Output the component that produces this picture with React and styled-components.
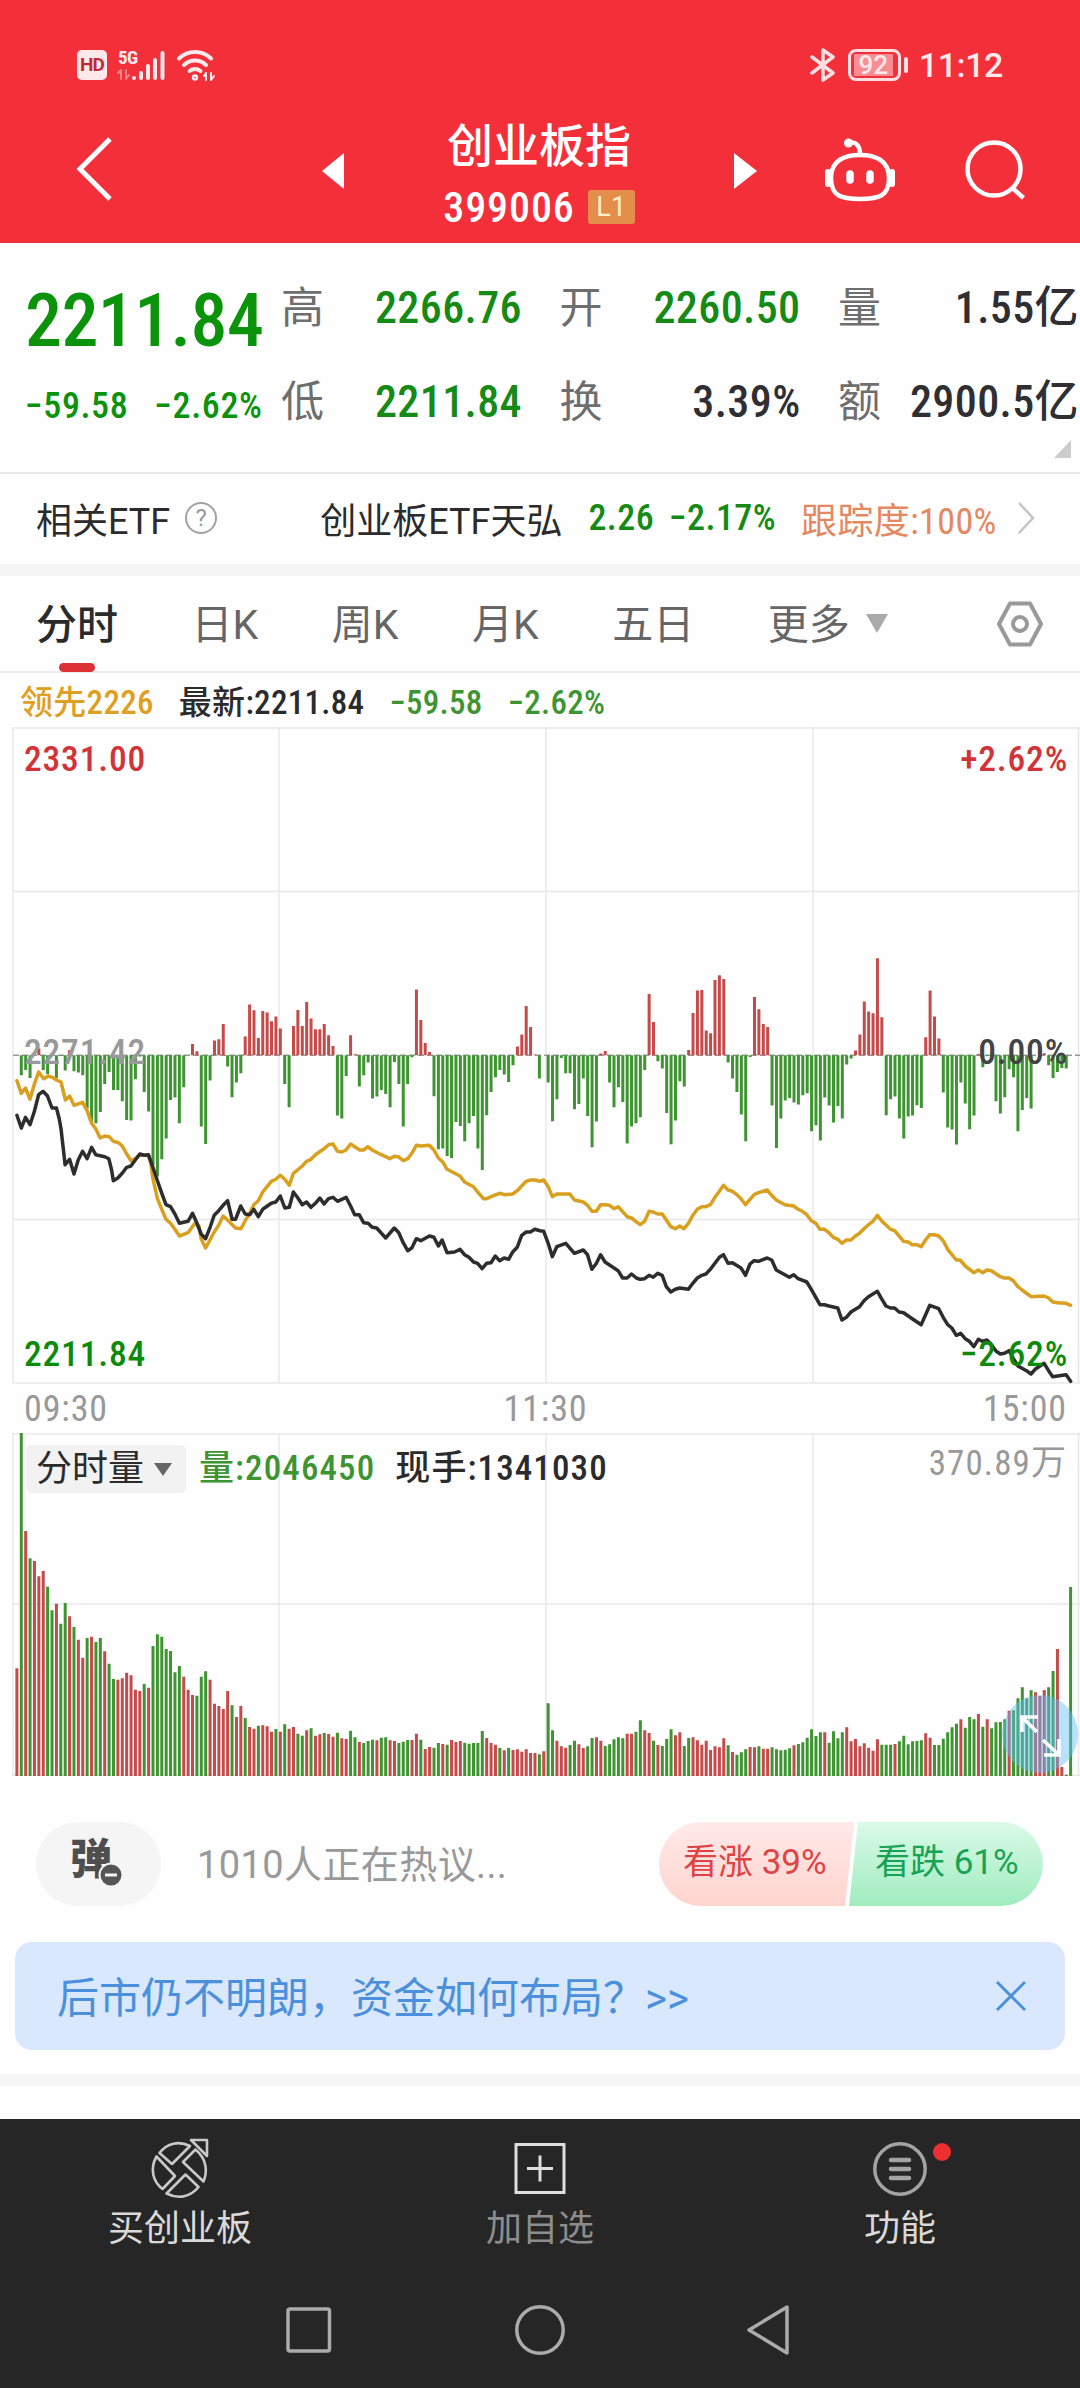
import styled, { createGlobalStyle } from "styled-components"

const GlobalStyle = createGlobalStyle`
    * {
        box-sizing: border-box;
    }
    body {
        margin: 0;
        background: #fefefe;
        color: #2b2b2b;
        font-family: Roboto, "Noto Sans CJK SC", sans-serif;
    }
    svg {
        display: block;
        flex-shrink: 0;
    }
`

const NUMERIC = `"Roboto Condensed", "Noto Sans CJK SC", sans-serif`

const RED = "#c54a4a"
const GREEN = "#3f9432"

// one entry per minute, 09:30 to 15:00
const momentum = [
    0, -60, -44, -68, 0, 20, -44, -56, 0, -68, -2, -46, 16, -48, -52, -60, -160, -205, -204, -170,
    -86, -50, -104, -104, -138, -194, -196, -72, -4, -110, -169, -330, -364, -312, -250, -134, -127, -204, -96, 0,
    34, 12, -214, -266, -76, 44, 48, 94, -34, -126, -82, -54, 56, 152, 135, 52, 133, 128, 102, 116,
    80, -86, -156, 88, 136, 88, 160, 110, 78, 78, 94, 60, 28, -181, -190, -62, 60, 3, -94, -60,
    -22, -130, -124, -104, -116, -156, -20, -86, -214, -86, -6, 197, 106, 37, 10, -123, -282, -280, -302, -308,
    -200, -212, -258, -204, -182, -280, -344, -180, -110, -66, -44, -58, -80, -30, 26, 62, 148, 85, 2, -70,
    0, -82, -198, -132, -8, -54, -54, -162, -146, -70, -182, -276, -199, 5, 13, -82, -156, -96, -140, -265,
    -214, -204, -186, -44, 184, 100, -18, -40, -173, -267, -196, -78, -94, 16, 127, 194, 196, 74, 66, 226,
    240, 229, -22, -70, -110, -178, -258, -5, 175, 138, 94, 85, -151, -278, -190, -136, -128, -142, -148, -120,
    -114, -228, -210, -256, -127, -151, -202, -152, -190, -28, -10, 14, 62, 161, 131, 126, 291, 114, -180, -132,
    -124, -190, -250, -184, -181, -150, -158, 54, 194, 116, 50, -112, -217, -223, -268, -82, -145, -222, -181, 4,
    -36, -2, -2, -138, -175, -126, -42, -66, -228, -164, -128, -160, 0, 14, 6, -30, -68, -50, -38, -40, 0,
]

// negative entries are minutes that closed lower
const volume = [
    323, -1029, 735, -653, 645, 599, 615, -568, -497, 517, -457, -519, 479, -447, 409, 355, -414, 418, -402, -414,
    374, -337, -291, 289, 293, 310, 302, 259, 255, -276, 265, -390, -425, -418, -381, -375, -311, -330, 298, 259,
    243, -241, -298, -314, 289, 217, 210, 201, 255, -212, 177, 210, -174, 147, 142, -151, 152, 149, 133, -141,
    133, -155, 142, 147, -127, -121, 137, -143, 121, 125, -129, 126, 118, -130, 113, 111, -136, -116, 102, -99,
    -105, -109, 107, -115, -116, 107, 105, -99, -103, -108, 108, 127, -109, 81, 87, -85, -99, 96, -94, 108,
    102, 105, -100, -97, -99, -99, -135, 114, 99, 94, -84, 77, -84, 78, 80, 73, 80, 69, 69, -65,
    74, -218, -137, 106, 89, 85, -93, -106, 95, 84, -89, -114, 116, 106, -90, -95, -110, -116, -113, 127,
    127, -133, -167, 137, 129, -106, 93, -90, -111, -140, 122, 131, -90, -114, 116, 107, 94, 106, 78, 89,
    86, 113, -92, 72, -64, -71, -80, 87, 86, -89, 82, 82, -86, -80, -77, -79, -83, 92, -96, -101,
    -115, -140, -120, -131, 131, -100, -134, -113, -131, 146, 104, 111, 89, 98, 85, 76, 110, -94, -94, -94,
    96, -104, -121, -95, -104, -105, -107, 128, 115, -93, -93, -112, -131, -146, -157, 170, -145, -177, -170, 186,
    -148, 170, -143, -161, -162, -170, 196, -197, -233, -266, -233, -257, 251, 240, 258, -266, -315, 381, 27, -4, -567,
]

const leadLine = "49,452 62,490 74,474 87,508 100,462 112,426 127,446 140,438 152,442 164,450 177,456 190,510 202,498 215,526 240,517 253,542 266,580 278,596 291,624 304,618 317,620 329,634 344,638 355,648 368,672 380,692 393,686 406,674 431,676 438,700 444,746 457,806 470,838 482,868 495,880 508,898 521,918 546,908 566,880 578,888 584,926 597,954 622,906 635,886 648,858 661,870 684,894 700,896 712,872 725,850 737,824 750,812 763,786 788,754 801,748 814,736 827,748 840,766 852,730 878,708 890,694 903,688 916,674 941,656 954,644 967,642 980,664 992,666 1005,660 1018,642 1030,650 1045,660 1056,660 1068,650 1081,660 1107,674 1132,686 1145,679 1158,681 1171,692 1184,686 1196,670 1209,646 1222,648 1247,646 1260,660 1273,684 1286,696 1298,718 1336,738 1349,756 1375,770 1387,786 1404,806 1413,806 1440,794 1454,790 1464,794 1489,792 1502,782 1515,768 1528,754 1540,750 1553,750 1568,754 1579,750 1592,770 1604,800 1617,792 1655,792 1668,810 1694,816 1706,826 1719,844 1732,844 1744,824 1757,824 1770,826 1783,836 1795,830 1821,860 1834,864 1846,874 1859,884 1872,874 1885,844 1897,846 1910,852 1923,852 1935,870 1948,890 1961,896 1974,888 1986,896 1999,880 2012,856 2025,838 2038,830 2050,830 2063,824 2076,802 2089,784 2101,766 2114,780 2127,784 2140,794 2152,806 2165,824 2178,808 2190,794 2203,788 2228,780 2241,796 2254,810 2279,824 2305,828 2318,838 2330,844 2343,854 2356,872 2369,880 2381,898 2394,898 2407,908 2420,922 2433,928 2445,940 2458,930 2471,930 2484,918 2496,910 2509,896 2522,884 2535,874 2548,856 2560,872 2586,898 2598,902 2624,934 2637,936 2649,944 2662,944 2675,950 2688,930 2700,914 2713,914 2726,918 2739,932 2752,958 2777,990 2788,990 2803,1008 2828,1028 2841,1020 2854,1028 2866,1020 2879,1022 2905,1040 2917,1044 2930,1044 2943,1052 2956,1070 2968,1080 2994,1100 3032,1098 3045,1104 3057,1116 3070,1118 3096,1120 3109,1126"

const priceLine = "49,556 62,594 74,562 87,584 100,544 112,494 125,484 138,498 151,534 164,534 172,566 177,596 189,704 202,688 215,732 227,690 240,664 253,686 266,652 278,674 304,680 316,686 324,720 329,752 342,744 355,730 368,712 380,708 393,690 406,672 419,676 431,674 444,712 457,752 470,790 482,824 495,830 508,852 521,880 546,874 559,850 572,880 584,912 597,926 610,892 622,856 635,842 648,826 661,812 674,868 684,868 699,828 712,852 725,854 737,838 750,860 763,838 788,820 801,816 814,798 827,834 840,832 852,786 865,804 878,824 890,816 903,832 916,820 929,804 941,822 954,806 967,802 980,814 1005,802 1018,828 1030,854 1043,854 1056,878 1069,880 1081,892 1094,894 1120,924 1145,894 1158,908 1171,938 1184,962 1196,954 1209,926 1222,932 1247,918 1260,922 1273,948 1284,930 1298,968 1320,966 1336,958 1349,974 1362,982 1375,996 1387,1000 1400,1016 1413,1000 1426,998 1438,978 1451,992 1464,984 1477,988 1489,966 1502,952 1515,916 1528,906 1540,906 1553,898 1568,902 1579,904 1592,940 1604,980 1617,950 1643,940 1668,970 1694,960 1706,974 1719,1018 1732,1000 1744,974 1757,996 1795,1022 1808,1044 1821,1044 1834,1032 1848,1044 1859,1048 1872,1046 1885,1036 1897,1042 1910,1030 1923,1036 1935,1070 1948,1086 1961,1078 1974,1074 1999,1078 2012,1060 2025,1044 2038,1036 2050,1032 2063,1018 2089,982 2101,974 2114,1000 2127,998 2152,1014 2165,1036 2178,1002 2190,992 2203,994 2228,984 2241,990 2254,1020 2292,1042 2305,1034 2318,1046 2343,1056 2356,1078 2381,1124 2394,1124 2407,1128 2433,1134 2445,1170 2458,1162 2471,1146 2496,1130 2509,1112 2522,1100 2535,1092 2548,1084 2560,1106 2573,1128 2586,1134 2598,1134 2611,1146 2624,1148 2649,1166 2675,1184 2688,1154 2700,1126 2726,1136 2739,1162 2752,1184 2764,1194 2777,1216 2790,1210 2803,1226 2815,1234 2828,1250 2841,1228 2854,1234 2866,1230 2879,1244 2893,1264 2905,1272 2917,1270 2930,1262 2943,1286 2956,1308 2981,1322 2994,1332 3006,1318 3032,1300 3045,1322 3057,1340 3096,1334 3109,1354"

const minuteX = (i) => 16.9 + i * 4.3905

// bars rising from / hanging below a base line, as a single path
const barPath = (values, base, keep, hang) =>
    values
        .map((v, i) => (keep(v) ? `M${minuteX(i).toFixed(2)} ${base}V${(base - (hang ? v : Math.abs(v)) / 3).toFixed(1)}` : ""))
        .join("")

// "x,y x,y" samples to page pixels, y measured from the top of the chart
const toPoints = (line) =>
    line
        .split(" ")
        .map((p) => {
            const [x, y] = p.split(",").map(Number)
            return `${(x / 2.904).toFixed(1)},${(203 + y / 3).toFixed(1)}`
        })
        .join(" ")

const Page = styled.div`
    width: 1080px;
    height: 2388px;
    display: flex;
    flex-direction: column;
    overflow: hidden;
`

const TopArea = styled.header`
    height: 243px;
    background: #f32f39;
    color: #fff;
`

const StatusBar = styled.div`
    height: 112px;
    padding: 18px 77px 0 77px;
    display: flex;
    align-items: center;
    justify-content: space-between;
    color: #ffe9ea;
`

const StatusGroup = styled.div`
    display: flex;
    align-items: center;
`

const HdBadge = styled.span`
    width: 30px;
    height: 30px;
    border-radius: 5px;
    background: #ffe9ea;
    color: #c02a35;
    font-size: 19px;
    font-weight: 700;
    line-height: 30px;
    text-align: center;
    letter-spacing: -1px;
`

const NetType = styled.span`
    width: 18px;
    margin: 0 -1px 14px 11px;
    font-family: ${NUMERIC};
    font-size: 19px;
    font-weight: 700;
    line-height: 16px;
    letter-spacing: -0.5px;
`

const SignalIcon = styled.svg`
    margin-left: -20px;
`

const WifiIcon = styled.svg`
    margin-left: 9px;
`

const Battery = styled.span`
    width: 53px;
    height: 32px;
    margin-left: 12px;
    padding: 2px;
    border: 3px solid #ffe0e2;
    border-radius: 8px;
`

const BatteryFill = styled.span`
    display: block;
    width: 39px;
    height: 22px;
    margin-left: 1px;
    background: #f98d93;
    font-size: 26px;
    font-weight: 500;
    line-height: 22px;
    text-align: center;
`

const BatteryTip = styled.span`
    width: 4px;
    height: 16px;
    margin-left: 3px;
    border-radius: 2px;
    background: #ffe0e2;
`

const Clock = styled.span`
    margin-left: 11px;
    font-size: 34px;
    line-height: 36px;
    font-weight: 500;
    letter-spacing: -0.4px;
`

const TitleBar = styled.div`
    height: 131px;
    padding: 0 54px 0 76px;
    display: flex;
    align-items: center;
`

const TitleIcon = styled.svg`
    margin-top: ${(props) => props.$lift}px;
    margin-left: ${(props) => props.$gap || 0}px;
`

const TitleBlock = styled.div`
    width: 391px;
    display: flex;
    flex-direction: column;
    align-items: center;
`

const StockName = styled.h1`
    margin: -3px 0 0;
    font-size: 46px;
    font-weight: 500;
    line-height: 62px;
`

const StockCode = styled.div`
    height: 61px;
    display: flex;
    align-items: center;
    gap: 13px;
    font-family: ${NUMERIC};
    font-size: 42px;
    font-weight: 500;
    letter-spacing: 0.9px;
`

const LevelTag = styled.span`
    width: 47px;
    height: 34px;
    border-radius: 3px;
    background: #e38e4a;
    color: #fff0c8;
    font-family: Roboto;
    font-size: 27px;
    font-weight: 400;
    line-height: 34px;
    text-align: center;
    letter-spacing: 0;
`

const Quote = styled.section`
    height: 231px;
    padding-top: 32px;
    border-bottom: 2px solid #e9e9e9;
    display: flex;
`

const LastPrice = styled.div`
    width: 281px;
    padding-left: 25px;
    color: #0b930b;
    font-family: ${NUMERIC};
    font-weight: 500;
    white-space: nowrap;
`

const Price = styled.div`
    font-size: 74px;
    line-height: 92px;
    letter-spacing: -0.6px;
`

const Change = styled.div`
    margin-top: 9px;
    display: flex;
    gap: 26px;
    font-size: 36px;
    line-height: 60px;
    letter-spacing: 0.6px;
`

const QuoteSide = styled.div`
    width: 798px;
`

const QuoteGrid = styled.div`
    padding-top: 3px;
    display: grid;
    grid-template-columns: repeat(3, 241px);
    column-gap: 37.5px;
    row-gap: 34px;
`

const QuoteCell = styled.div`
    display: flex;
    justify-content: space-between;
    line-height: 60px;
    white-space: nowrap;
`

const QuoteLabel = styled.span`
    color: #6e6e6e;
    font-size: 43px;
`

const QuoteValue = styled.span`
    color: ${(props) => (props.$down ? "#168a16" : "#2f2f33")};
    font-family: ${NUMERIC};
    font-size: 44px;
    font-weight: 500;
    letter-spacing: 0.4px;
`

const FoldMark = styled.svg`
    margin: 8px 8px 0 auto;
`

const EtfRow = styled.section`
    height: 90px;
    padding: 0 0 2px 36px;
    display: flex;
    align-items: center;
    font-size: 36px;
    white-space: nowrap;
`

const HelpIcon = styled.span`
    width: 32px;
    height: 32px;
    margin: 0 103px 0 15px;
    border: 2px solid #a2a2a2;
    border-radius: 50%;
    color: #999;
    font-size: 24px;
    line-height: 28px;
    text-align: center;
`

const EtfChange = styled.span`
    margin-left: ${(props) => props.$gap}px;
    color: #168a16;
    font-family: ${NUMERIC};
    font-weight: 500;
    letter-spacing: 0.4px;
`

const TrackRate = styled.span`
    margin: 0 20px 0 25px;
    color: #e5875f;
    font-family: ${NUMERIC};
    letter-spacing: 0.4px;
`

const Divider = styled.div`
    height: 12px;
    background: #f5f5f5;
`

const Tabs = styled.nav`
    height: 97px;
    padding: 0 37px 0 36px;
    border-bottom: 2px solid #ececec;
    display: flex;
    align-items: center;
    gap: 73.5px;
`

const Tab = styled.span`
    height: 95px;
    display: flex;
    flex-direction: column;
    align-items: center;
    color: ${(props) => (props.$active ? "#2b2b2b" : "#666")};
    font-size: 41px;
    font-weight: ${(props) => (props.$active ? 500 : 400)};
    line-height: 86px;
    padding-top: 6px;

    &::after {
        content: "";
        width: 36px;
        height: 9px;
        flex-shrink: 0;
        margin-top: -5px;
        border-radius: 5px;
        background: ${(props) => (props.$active ? "#dc3236" : "transparent")};
    }
`

const MoreTab = styled.div`
    display: flex;
    align-items: center;
    gap: 16px;
`

const SettingsIcon = styled.svg`
    margin-left: auto;
`

const Legend = styled.div`
    height: 54px;
    padding: 6px 0 0 20px;
    display: flex;
    align-items: center;
    gap: 25px;
    font-family: ${NUMERIC};
    font-size: 33px;
    font-weight: 500;
    letter-spacing: 0.3px;
    line-height: 48px;
    white-space: nowrap;
`

const LegendItem = styled.span`
    color: ${(props) => props.$color};
`

const ChartText = styled.text`
    fill: ${(props) => props.fill};
    font-family: ${NUMERIC};
    font-size: 35.5px;
    font-weight: 500;
    letter-spacing: 0.8px;
`

const TimeAxis = styled.div`
    height: 49px;
    padding: 1px 13px 0 24px;
    display: flex;
    justify-content: space-between;
    align-items: center;
    color: #999;
    font-family: ${NUMERIC};
    font-size: 36px;
    letter-spacing: 0.9px;
`

const VolumePanel = styled.div`
    position: relative;
    height: 343px;
`

const VolumeLegend = styled.div`
    position: absolute;
    top: 12px;
    left: 26px;
    right: 13px;
    display: flex;
    align-items: center;
    font-family: ${NUMERIC};
    font-size: 35px;
    font-weight: 500;
    letter-spacing: 1.1px;
    line-height: 48px;
    white-space: nowrap;
`

const VolumeSelect = styled.span`
    width: 160px;
    height: 48px;
    padding-left: 10px;
    margin-right: 13px;
    border-radius: 5px;
    background: #f2f2f2;
    display: flex;
    align-items: center;
    gap: 10px;
    font-weight: 400;
    font-size: 36px;
    letter-spacing: 0;
`

const VolumeText = styled.span`
    margin-right: 20px;
    color: ${(props) => props.$color};
`

const VolumeMax = styled.span`
    margin: -11px 0 0 auto;
    color: #999;
    font-weight: 400;
`

const ExpandButton = styled.button`
    position: absolute;
    left: 1002px;
    top: 262px;
    width: 76px;
    height: 78px;
    padding: 0;
    border: 0;
    border-radius: 50%;
    background: rgba(100, 190, 250, 0.45);
`

const Discuss = styled.section`
    height: 166px;
    padding: 10px 37px 0 36px;
    display: flex;
    align-items: center;
`

const BulletButton = styled.div`
    width: 125px;
    height: 84px;
    border-radius: 42px;
    background: #f5f5f5;
    position: relative;
    padding-left: 34px;
    color: #4e4e4e;
    font-size: 42px;
    font-weight: 900;
    line-height: 75px;
`

const BulletOff = styled.svg`
    position: absolute;
    left: 62px;
    top: 40px;
`

const DiscussText = styled.span`
    margin: -5px 0 0 36px;
    color: #999;
    font-size: 38px;
    letter-spacing: 0.4px;
`

const Votes = styled.div`
    width: 384px;
    height: 84px;
    margin-left: auto;
    border-radius: 42px;
    overflow: hidden;
    display: flex;
    font-size: 35px;
    line-height: 82px;
    white-space: nowrap;
`

const VoteUp = styled.div`
    width: 195px;
    padding-left: 24px;
    background: linear-gradient(#ffeae9, #ffd4ce);
    clip-path: polygon(0 0, 100% 0, 186px 100%, 0 100%);
    color: #de4444;
`

const VoteDown = styled.div`
    width: 194px;
    margin-left: -5px;
    padding-left: 26px;
    background: linear-gradient(#dbfae8, #a0ecbf);
    clip-path: polygon(9px 0, 100% 0, 100% 100%, 0 100%);
    color: #17a356;
`

const Banner = styled.section`
    height: 108px;
    margin: 0 15px 24px;
    padding: 0 38px 0 42px;
    border-radius: 17px;
    background: #d9e8fd;
    display: flex;
    align-items: center;
    justify-content: space-between;
    color: #4a90dc;
    font-size: 42px;
`

const BannerText = styled.span`
    margin-top: -4px;
    white-space: pre;
`

const BottomArea = styled.footer`
    height: 269px;
    margin-top: auto;
    background: #262626;
`

const Actions = styled.div`
    height: 154px;
    display: grid;
    grid-template-columns: repeat(3, 1fr);
`

const Action = styled.div`
    padding-top: 19px;
    display: flex;
    flex-direction: column;
    align-items: center;
    color: ${(props) => (props.$muted ? "#8d8d8d" : "#dadada")};
    font-size: 36px;
    line-height: 50px;
    gap: 4px;
`

const SystemNav = styled.div`
    height: 115px;
    padding: 0 290px 2px 285px;
    display: flex;
    align-items: center;
    justify-content: space-between;
`

const stats = [
    { label: "高", value: "2266.76", down: true },
    { label: "开", value: "2260.50", down: true },
    { label: "量", value: "1.55亿" },
    { label: "低", value: "2211.84", down: true },
    { label: "换", value: "3.39%" },
    { label: "额", value: "2900.5亿" },
]

const Grid = ({ bottom, rows }) => (
    <g stroke="#e8e8e8" strokeWidth="1.5">
        {[13, 279, 546, 813, 1078.5].map((x) => <line key={x} x1={x} x2={x} y1="0" y2={bottom} />)}
        {rows.map((y) => <line key={y} x1="12" x2="1080" y1={y} y2={y} />)}
    </g>
)

const Status = () => (
    <StatusBar>
        <StatusGroup>
            <HdBadge>HD</HdBadge>
            <NetType>5G</NetType>
            <SignalIcon width="52" height="32" viewBox="0 0 52 32" fill="none" stroke="#ffe9ea" strokeLinecap="round" strokeWidth="4">
                <path d="M6 21v9M3 24l3-3M11 21v9M11 30l3-4" stroke="#f9868c" strokeWidth="2" />
                <path d="M19 29v.1M26 24v5M33 17v12M40 11v18M47.500 4v25" />
            </SignalIcon>
            <WifiIcon width="40" height="32" viewBox="0 0 40 32" fill="none" stroke="#ffe9ea" strokeLinecap="round" strokeWidth="4">
                <path d="M3 9.500a23 23 0 0 1 32 0M8 16a16 16 0 0 1 22 0M13.500 22a9 9 0 0 1 11 0" />
                <circle cx="19" cy="28.500" r="1.200" />
                <path d="M30 24v7M28 27l2-3M35 24v7M35 31l3-4" strokeWidth="2" />
            </WifiIcon>
        </StatusGroup>
        <StatusGroup>
            <svg width="26" height="34" viewBox="0 0 26 34" fill="none" stroke="#ffe0e2" strokeWidth="3.500" strokeLinejoin="round" strokeLinecap="round">
                <path d="M2 9l21 16-10 7V2l10 7L2 25" />
            </svg>
            <Battery><BatteryFill>92</BatteryFill></Battery>
            <BatteryTip />
            <Clock>11:12</Clock>
        </StatusGroup>
    </StatusBar>
)

const Title = () => (
    <TitleBar>
        <TitleIcon $lift={-18} width="36" height="64" viewBox="0 0 36 64" fill="none" stroke="#fff" strokeWidth="5">
            <path d="M34 2L4 32l30 30" />
        </TitleIcon>
        <TitleIcon $lift={-13} $gap={210} width="22" height="36" viewBox="0 0 22 36" fill="#fff">
            <path d="M22 0v36L0 18z" />
        </TitleIcon>
        <TitleBlock>
            <StockName>创业板指</StockName>
            <StockCode>399006<LevelTag>L1</LevelTag></StockCode>
        </TitleBlock>
        <TitleIcon $lift={-13} width="23" height="36" viewBox="0 0 23 36" fill="#fff">
            <path d="M0 0v36l23-18z" />
        </TitleIcon>
        <TitleIcon $lift={-16} $gap={68} width="70" height="64" viewBox="0 0 70 64" fill="none" stroke="#fff" strokeWidth="4.500">
            <path d="M35 17C50 17 64 22 64 40S54 61 35 61 6 58 6 40 20 17 35 17z" />
            <path d="M24 5c7-2 11 3 11 11" />
            <circle cx="23.500" cy="5" r="4.500" fill="#fff" stroke="none" />
            <path d="M3 34v12M67 34v12" strokeWidth="6" strokeLinecap="round" />
            <path d="M25 36v6M45 36v6" strokeWidth="7.500" strokeLinecap="round" />
        </TitleIcon>
        <TitleIcon $lift={-16} $gap={69} width="62" height="62" viewBox="0 0 62 62" fill="none" stroke="#fff" strokeWidth="4.500">
            <circle cx="30" cy="30" r="26.500" />
            <path d="M48.500 49l11 10" />
        </TitleIcon>
    </TitleBar>
)

const PriceChart = () => (
    <svg width="1080" height="657" viewBox="0 0 1080 657">
        <Grid bottom="656" rows={[1, 164.5, 492.5, 656]} />
        <line x1="13" x2="1080" y1="328.300" y2="328.300" stroke="#999" strokeWidth="1.500" strokeDasharray="6 3" />
        <path d={barPath(momentum, 328.300, (v) => v > 0, true)} stroke={RED} strokeWidth="3" />
        <path d={barPath(momentum, 328.300, (v) => v < 0, true)} stroke={GREEN} strokeWidth="3" />
        <ChartText x="24" y="337" fill="#999">2271.42</ChartText>
        <ChartText x="1068" y="337" textAnchor="end" fill="#444">0.00%</ChartText>
        <g fill="none" strokeWidth="3.500" strokeLinejoin="round" strokeLinecap="round">
            <polyline points={toPoints(leadLine)} stroke="#d9a01f" />
            <polyline points={toPoints(priceLine)} stroke="#2d2d2d" />
        </g>
        <ChartText x="24" y="44" fill="#d13438">2331.00</ChartText>
        <ChartText x="1068" y="44" textAnchor="end" fill="#d13438">+2.62%</ChartText>
        <ChartText x="24" y="639" fill="#0b8a0b">2211.84</ChartText>
        <ChartText x="1068" y="639" textAnchor="end" fill="#0b8a0b">−2.62%</ChartText>
    </svg>
)

const VolumeChart = () => (
    <VolumePanel>
        <svg width="1080" height="343" viewBox="0 0 1080 343">
            <Grid bottom="343" rows={[1, 171, 342.3]} />
            <path d={barPath(volume, 343, (v) => v > 0)} stroke={RED} strokeWidth="3" />
            <path d={barPath(volume, 343, (v) => v < 0)} stroke={GREEN} strokeWidth="3" />
        </svg>
        <VolumeLegend>
            <VolumeSelect>
                分时量
                <svg width="18" height="13" viewBox="0 0 18 13"><path d="M0 0h18L9 13z" fill="#666" /></svg>
            </VolumeSelect>
            <VolumeText $color="#3f9432">量:2046450</VolumeText>
            <VolumeText $color="#2b2b2b">现手:1341030</VolumeText>
            <VolumeMax>370.89万</VolumeMax>
        </VolumeLegend>
        <ExpandButton>
            <svg width="76" height="78" viewBox="0 0 76 78" fill="none" stroke="#fff" strokeWidth="3.500">
                <path d="M20 37V22h16M20 22l15 15M41 45l16 15M57 44v16H42" />
            </svg>
        </ExpandButton>
    </VolumePanel>
)

const Footer = () => (
    <BottomArea>
        <Actions>
            <Action>
                <svg width="60" height="62" viewBox="0 0 60 62" fill="none" stroke="#c9c9c9" strokeWidth="2.600" strokeLinejoin="round">
                    <path d="M9.500 15C17 5 29 2.500 40 8L22 26z" />
                    <path d="M6.500 18.500C-.5 31 3 44 12.500 51L25 38z" />
                    <path d="M45.500 11.500C58 22 57 35 53.500 43.500L33 24z" />
                    <path d="M16.500 55.500l19-19 13 12.500c-8 10-20 12.500-32 6.500z" />
                    <path d="M41 2h16v16z" />
                </svg>
                买创业板
            </Action>
            <Action $muted>
                <svg width="60" height="62" viewBox="0 0 60 62" fill="none" stroke="#dedede" strokeWidth="3">
                    <path d="M6 6.500h48v48H6zM17 30.500h26M30 17.500v26" />
                </svg>
                加自选
            </Action>
            <Action>
                <svg width="104" height="62" viewBox="0 0 104 62" fill="none" stroke="#a3a3a3" strokeWidth="3.500">
                    <circle cx="52" cy="31" r="25.200" />
                    <path d="M43 22h18M43 31h18M43 40h18" strokeWidth="4.500" strokeLinecap="round" />
                    <circle cx="94" cy="14" r="9" fill="#ec3030" stroke="none" />
                </svg>
                功能
            </Action>
        </Actions>
        <SystemNav>
            <svg width="48" height="50" viewBox="0 0 48 50" fill="none" stroke="#ababab" strokeWidth="3.500">
                <rect x="3" y="4" width="41.500" height="42" rx="2" />
            </svg>
            <svg width="52" height="52" viewBox="0 0 52 52" fill="none" stroke="#ababab" strokeWidth="3.500">
                <circle cx="26" cy="26" r="23.200" />
            </svg>
            <svg width="44" height="52" viewBox="0 0 44 52" fill="none" stroke="#ababab" strokeWidth="3.500" strokeLinejoin="round">
                <path d="M41 3v46L3 26z" />
            </svg>
        </SystemNav>
    </BottomArea>
)

const App = () => {
    return (
        <Page>
            <GlobalStyle />
            <TopArea>
                <Status />
                <Title />
            </TopArea>
            <Quote>
                <LastPrice>
                    <Price>2211.84</Price>
                    <Change><span>−59.58</span><span>−2.62%</span></Change>
                </LastPrice>
                <QuoteSide>
                    <QuoteGrid>
                        {stats.map((item) => (
                            <QuoteCell key={item.label}>
                                <QuoteLabel>{item.label}</QuoteLabel>
                                <QuoteValue $down={item.down}>{item.value}</QuoteValue>
                            </QuoteCell>
                        ))}
                    </QuoteGrid>
                    <FoldMark width="17" height="18" viewBox="0 0 17 18"><path d="M17 0v18H0z" fill="#ccc" /></FoldMark>
                </QuoteSide>
            </Quote>
            <EtfRow>
                相关ETF
                <HelpIcon>?</HelpIcon>
                创业板ETF天弘
                <EtfChange $gap={26}>2.26</EtfChange>
                <EtfChange $gap={15}>−2.17%</EtfChange>
                <TrackRate>跟踪度:100%</TrackRate>
                <svg width="18" height="34" viewBox="0 0 18 34" fill="none" stroke="#c4c4c4" strokeWidth="2.500"><path d="M2 2l14 15L2 32" /></svg>
            </EtfRow>
            <Divider />
            <Tabs>
                <Tab $active>分时</Tab>
                <Tab>日K</Tab>
                <Tab>周K</Tab>
                <Tab>月K</Tab>
                <Tab>五日</Tab>
                <MoreTab>
                    <Tab>更多</Tab>
                    <svg width="22" height="19" viewBox="0 0 22 19"><path d="M0 0h22L11 19z" fill="#aaa" /></svg>
                </MoreTab>
                <SettingsIcon width="46" height="46" viewBox="0 0 46 46" fill="none" stroke="#999" strokeWidth="4" strokeLinejoin="round">
                    <path d="M13 2.500h20L44 23 33 43.500H13L2 23z" />
                    <circle cx="23" cy="23" r="7" />
                </SettingsIcon>
            </Tabs>
            <Legend>
                <LegendItem $color="#dda022">领先2226</LegendItem>
                <LegendItem $color="#2b2b2b">最新:2211.84</LegendItem>
                <LegendItem $color="#3f9432">−59.58</LegendItem>
                <LegendItem $color="#3f9432">−2.62%</LegendItem>
            </Legend>
            <PriceChart />
            <TimeAxis>
                <span>09:30</span>
                <span>11:30</span>
                <span>15:00</span>
            </TimeAxis>
            <VolumeChart />
            <Discuss>
                <BulletButton>
                    弹
                    <BulletOff width="26" height="26" viewBox="0 0 26 26">
                        <circle cx="13" cy="13" r="11.500" fill="#555" stroke="#f5f5f5" strokeWidth="2" />
                        <path d="M7 13h12" stroke="#f5f5f5" strokeWidth="3" />
                    </BulletOff>
                </BulletButton>
                <DiscussText>1010人正在热议...</DiscussText>
                <Votes>
                    <VoteUp>看涨 39%</VoteUp>
                    <VoteDown>看跌 61%</VoteDown>
                </Votes>
            </Discuss>
            <Banner>
                <BannerText>{"后市仍不明朗，资金如何布局？>>"}</BannerText>
                <svg width="32" height="32" viewBox="0 0 32 32" fill="none" stroke="#4a90dc" strokeWidth="3"><path d="M2 2l28 28M30 2L2 30" /></svg>
            </Banner>
            <Divider />
            <Footer />
        </Page>
    )
}

export default App
